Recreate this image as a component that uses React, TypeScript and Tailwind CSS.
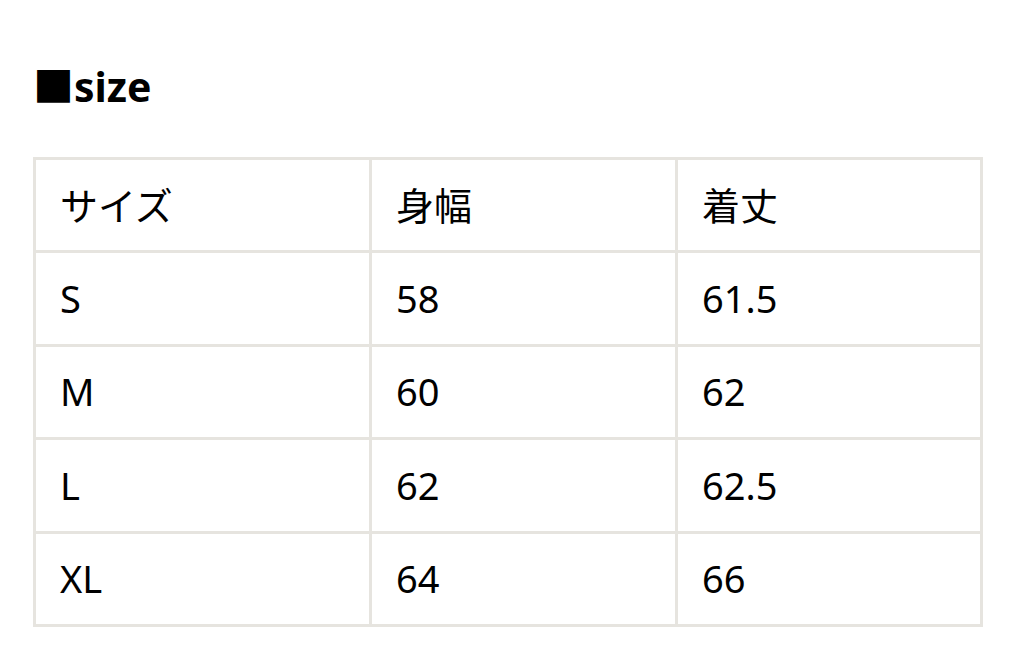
const rows = [
  ['S', '58', '61.5'],
  ['M', '60', '62'],
  ['L', '62', '62.5'],
  ['XL', '64', '66'],
];

const cell = 'border-[3px] border-[#e6e4df] h-[93.4px] px-6 align-middle text-left font-normal';

export default function App() {
  return (
    <div
      className="min-h-screen bg-white px-[33px] pt-[62px] text-black"
      style={{ fontFamily: '"Noto Sans", "Noto Sans CJK JP", sans-serif' }}
    >
      <h2 className="text-[41px] leading-[48px] font-bold">■size</h2>
      <table className="mt-[47px] w-[947px] table-fixed border-collapse border-[3px] border-[#e6e4df] text-[38px]">
        <colgroup>
          <col className="w-[336px]" />
          <col className="w-[306px]" />
          <col className="w-[305px]" />
        </colgroup>
        <thead>
          <tr>
            <th className={cell}>サイズ</th>
            <th className={cell}>身幅</th>
            <th className={cell}>着丈</th>
          </tr>
        </thead>
        <tbody>
          {rows.map((r) => (
            <tr key={r[0]}>
              {r.map((v, i) => (
                <td key={i} className={cell}>
                  {v}
                </td>
              ))}
            </tr>
          ))}
        </tbody>
      </table>
    </div>
  );
}
